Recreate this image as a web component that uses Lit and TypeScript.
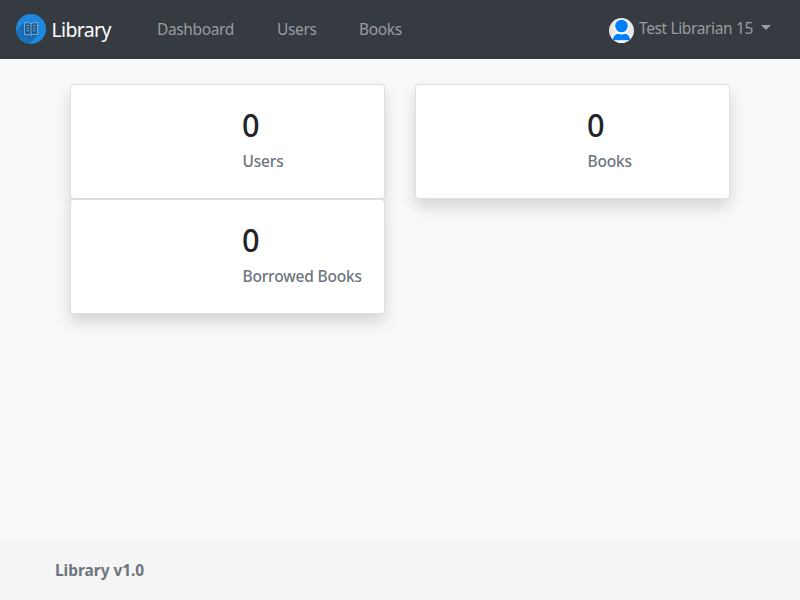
import { LitElement, html, css } from "lit";
import { customElement, property } from "lit/decorators.js";

@customElement("stat-card")
class StatCard extends LitElement {
  @property({ type: Number }) count = 0;
  @property() label = "";

  static styles = css`
    :host {
      display: block;
      box-sizing: border-box;
      height: 115px;
      padding: 21px 10px 0 171.5px;
      background: #fff;
      border: 1px solid rgba(0, 0, 0, 0.125);
      border-radius: 4px;
      box-shadow: 0 8px 16px rgba(0, 0, 0, 0.15);
    }
    .count {
      font-size: 32px;
      line-height: 38px;
      font-weight: 500;
      color: #212529;
      transform: scaleX(0.96);
      transform-origin: left;
      margin-left: -0.5px;
    }
    .label {
      margin-top: 7px;
      font-size: 15.5px;
      line-height: 20px;
      font-weight: 500;
      letter-spacing: -0.18px;
      color: #6c757d;
      white-space: nowrap;
    }
  `;

  render() {
    return html`<div class="count">${this.count}</div>
      <div class="label">${this.label}</div>`;
  }
}

@customElement("app-root")
class AppRoot extends LitElement {
  static styles = css`
    :host {
      display: flex;
      flex-direction: column;
      height: 600px;
      background: #f8f9fb;
      font-family: "Noto Sans", sans-serif;
      font-size: 16px;
      line-height: 24px;
    }
    nav {
      display: flex;
      align-items: center;
      box-sizing: border-box;
      height: 59px;
      padding: 0 29px 1px 16px;
      background: #363a41;
      color: #9a9c9f;
      font-size: 15.5px;
      letter-spacing: -0.37px;
      white-space: nowrap;
    }
    .logo {
      width: 30px;
      height: 30px;
      margin-right: 5.5px;
    }
    .brand {
      width: 105.5px;
      font-size: 19.5px;
      letter-spacing: -0.65px;
      color: #fff;
      padding-top: 1px;
    }
    .dashboard {
      width: 120px;
    }
    .users {
      width: 82px;
    }
    .account {
      display: flex;
      align-items: center;
      margin-left: auto;
    }
    .avatar {
      width: 25px;
      height: 25px;
      margin: 3px 5px 0 0;
    }
    .name {
      width: 115px;
      margin-top: -2px;
    }
    .caret {
      margin: -4px 0 0 7px;
      border: 5px solid transparent;
      border-top-color: #9a9c9f;
      border-bottom: 0;
    }
    main {
      flex: 1;
      display: grid;
      grid-template-columns: 315px 315px;
      column-gap: 30px;
      align-content: start;
      padding: 25px 70px 0;
    }
    footer {
      box-sizing: border-box;
      height: 60px;
      padding-left: 55px;
      line-height: 61px;
      font-size: 15.5px;
      letter-spacing: -0.05px;
      background: #f5f5f5;
      color: #6c757d;
      font-weight: 700;
    }
  `;

  render() {
    return html`
      <nav>
        <svg class="logo" viewBox="0 0 30 30">
          <defs>
            <clipPath id="disc"><circle cx="15" cy="15" r="15" /></clipPath>
            <linearGradient id="shade" x1="1" y1="0" x2="0" y2="1">
              <stop offset="0" stop-color="#145b9b" />
              <stop offset="1" stop-color="#1b7fd0" />
            </linearGradient>
          </defs>
          <circle cx="15" cy="15" r="15" fill="#1e88dc" />
          <path clip-path="url(#disc)" d="M8 9L22 21L11 32L-6 23Z" fill="url(#shade)" />
          <path d="M8.5 8.5L14 9L15 10L16 9L21.5 8.5V20.5H16.5L15 21.5L13.5 20.5H8.5Z" fill="#155a94" stroke="#91b8d5" stroke-width=".8" />
          <path d="M15 10V21.5M10.5 11.5L13 12M10.5 14L13 14.5M10.5 16.5L13 17M19.5 11.5L17 12M19.5 14L17 14.5M19.5 16.5L17 17" fill="none" stroke="#91b8d5" stroke-width=".9" />
        </svg>
        <span class="brand">Library</span>
        <span class="dashboard">Dashboard</span>
        <span class="users">Users</span>
        <span>Books</span>
        <div class="account">
          <svg class="avatar" viewBox="0 0 25 25">
            <defs><clipPath id="face"><circle cx="12.5" cy="12.5" r="12.5" /></clipPath></defs>
            <g clip-path="url(#face)">
              <path d="M0 0H25V25H0Z" fill="#e9e7e5" />
              <circle cx="12.5" cy="8.5" r="7.6" fill="#fff" />
              <path d="M1 25Q3 14 9 14H16Q22 14 24 25Z" fill="#fff" />
              <circle cx="12.5" cy="8" r="6.3" fill="#0080ff" />
              <path d="M3.2 22.3Q5 16 9 15.8Q12.5 17.4 16 15.8Q20 16 21.8 22.3Z" fill="#0080ff" />
            </g>
          </svg>
          <span class="name">Test Librarian 15</span>
          <span class="caret"></span>
        </div>
      </nav>
      <main>
        <stat-card label="Users"></stat-card>
        <stat-card label="Books"></stat-card>
        <stat-card label="Borrowed Books"></stat-card>
      </main>
      <footer>Library v1.0</footer>
    `;
  }
}
